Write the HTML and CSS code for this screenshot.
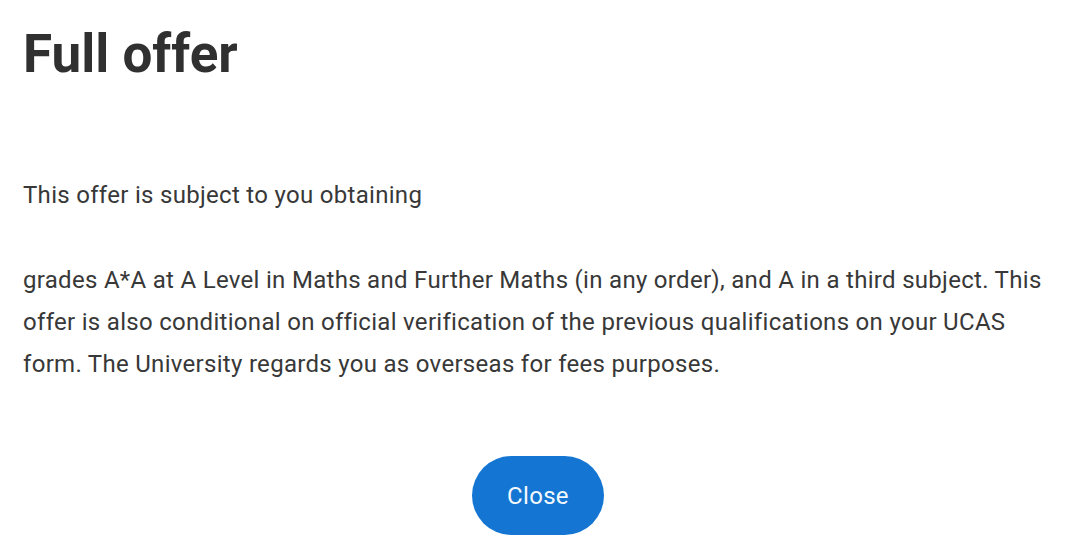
FILE: index.html
```html
<!DOCTYPE html>
<html lang="en">
<head>
<meta charset="utf-8">
<title>Full offer</title>
<link rel="stylesheet" href="styles.css">
</head>
<body>
<main class="dialog">
  <h1 class="title">Full offer</h1>
  <p class="lead">This offer is subject to you obtaining</p>
  <p class="detail">grades A*A at A Level in Maths and Further Maths (in any order), and A in a third subject. This offer is also conditional on official verification of the previous qualifications on your UCAS form. The University regards you as overseas for fees purposes.</p>
  <div class="actions">
    <button class="close-btn" type="button">Close</button>
  </div>
</main>
</body>
</html>
```

FILE: styles.css
```css
html, body {
  margin: 0;
  padding: 0;
  background: #ffffff;
}
body {
  font-family: Roboto, "Liberation Sans", sans-serif;
  color: #383838;
}
.dialog {
  padding: 24px 24px 0 23px;
  display: flex;
  flex-direction: column;
}
.title {
  margin: 0;
  font-size: 53px;
  font-weight: 700;
  line-height: 60px;
  color: #303030;
}
.lead {
  margin: 90px 0 0 0;
  font-size: 24px;
  letter-spacing: 0.3px;
  line-height: 42px;
}
.detail {
  margin: 43px 0 0 0;
  font-size: 24px;
  letter-spacing: 0.3px;
  line-height: 42px;
}
.actions {
  display: flex;
  justify-content: center;
  margin-top: 71px;
}
.close-btn {
  width: 132px;
  height: 79px;
  border: none;
  border-radius: 40px;
  background: #1476d2;
  color: #f2f8fd;
  font-family: Roboto, "Liberation Sans", sans-serif;
  font-size: 24px;
  letter-spacing: 0.3px;
  padding: 0;
  margin-left: -3px;
}
```
